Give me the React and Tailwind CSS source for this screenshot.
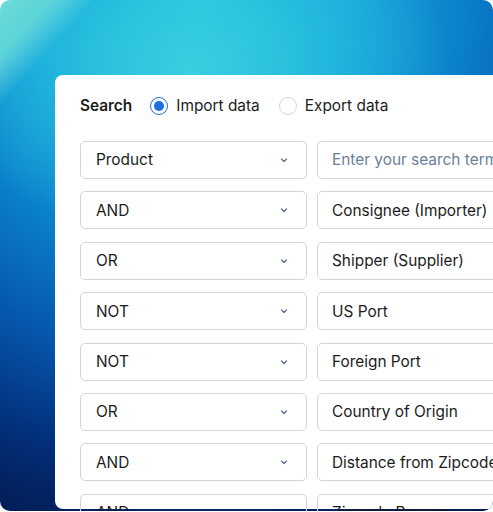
import React from 'react';

const rows = [
  ['Product', 'Enter your search term', true],
  ['AND', 'Consignee (Importer)'],
  ['OR', 'Shipper (Supplier)'],
  ['NOT', 'US Port'],
  ['NOT', 'Foreign Port'],
  ['OR', 'Country of Origin'],
  ['AND', 'Distance from Zipcode'],
  ['AND', 'Zipcode Range'],
];

const Chevron = () => (
  <svg width="10" height="10" viewBox="0 0 10 10" fill="none" className="text-slate-500">
    <path d="M2.5 4l2.5 2.5L7.5 4" stroke="currentColor" strokeWidth="1.4" strokeLinecap="round" strokeLinejoin="round" />
  </svg>
);

export default function App() {
  return (
    <div className="w-[493px] h-[512px] bg-white" style={{ fontFamily: 'Inter, "Noto Sans", sans-serif' }}>
      <div className="relative w-[493px] h-[511px] rounded-[10px] overflow-hidden bg-[linear-gradient(132deg,#6cdad8_0%,#5cd4d8_5.5%,rgba(120,225,225,0.5)_7%,rgba(0,0,0,0)_10%),radial-gradient(ellipse_260px_170px_at_190px_70px,rgba(58,210,225,0.85)_0%,rgba(40,195,222,0.5)_55%,rgba(0,0,0,0)_100%),radial-gradient(circle_560px_at_200px_0px,#30c8e0_0%,#18a6da_28%,#0a7ecb_48%,#0656ad_66%,#032e78_84%,#021a50_100%)]">
        <div className="relative ml-[55px] mt-[75px] w-[480px] h-[434px] bg-white rounded-[8px] pl-[25px] pt-[19px]">
          <div className="flex items-center h-[24px] text-[15.4px] text-[#1c1c1c]">
            <span className="font-semibold">Search</span>
            <span className="ml-[18px] w-[18px] h-[18px] rounded-full border-[1.5px] border-[#1e6ee6] flex items-center justify-center">
              <span className="w-[10px] h-[10px] rounded-full bg-[#1e6ee6]" />
            </span>
            <span className="ml-[8px]">Import data</span>
            <span className="ml-[19px] w-[18px] h-[18px] rounded-full border-[1.5px] border-[#cfd5de]" />
            <span className="ml-[8px]">Export data</span>
          </div>
          <div className="mt-[23px] grid grid-cols-[227px_227px] gap-x-[10px] gap-y-[12.4px]">
            {rows.map(([op, field, ph], i) => (
              <React.Fragment key={i}>
                <div className="h-[38px] rounded-[5px] border border-[#cdd5df] flex items-center justify-between pl-[15px] pr-[17px] text-[15.4px] text-[#1c1c1c]">
                  <span>{op}</span>
                  <Chevron />
                </div>
                <div className={`h-[38px] rounded-[5px] border border-[#cdd5df] flex items-center pl-[14px] text-[15.4px] whitespace-nowrap overflow-hidden ${ph ? 'text-[#6b7f99]' : 'text-[#1c1c1c]'}`}>
                  {field}
                </div>
              </React.Fragment>
            ))}
          </div>
        </div>
      </div>
    </div>
  );
}
